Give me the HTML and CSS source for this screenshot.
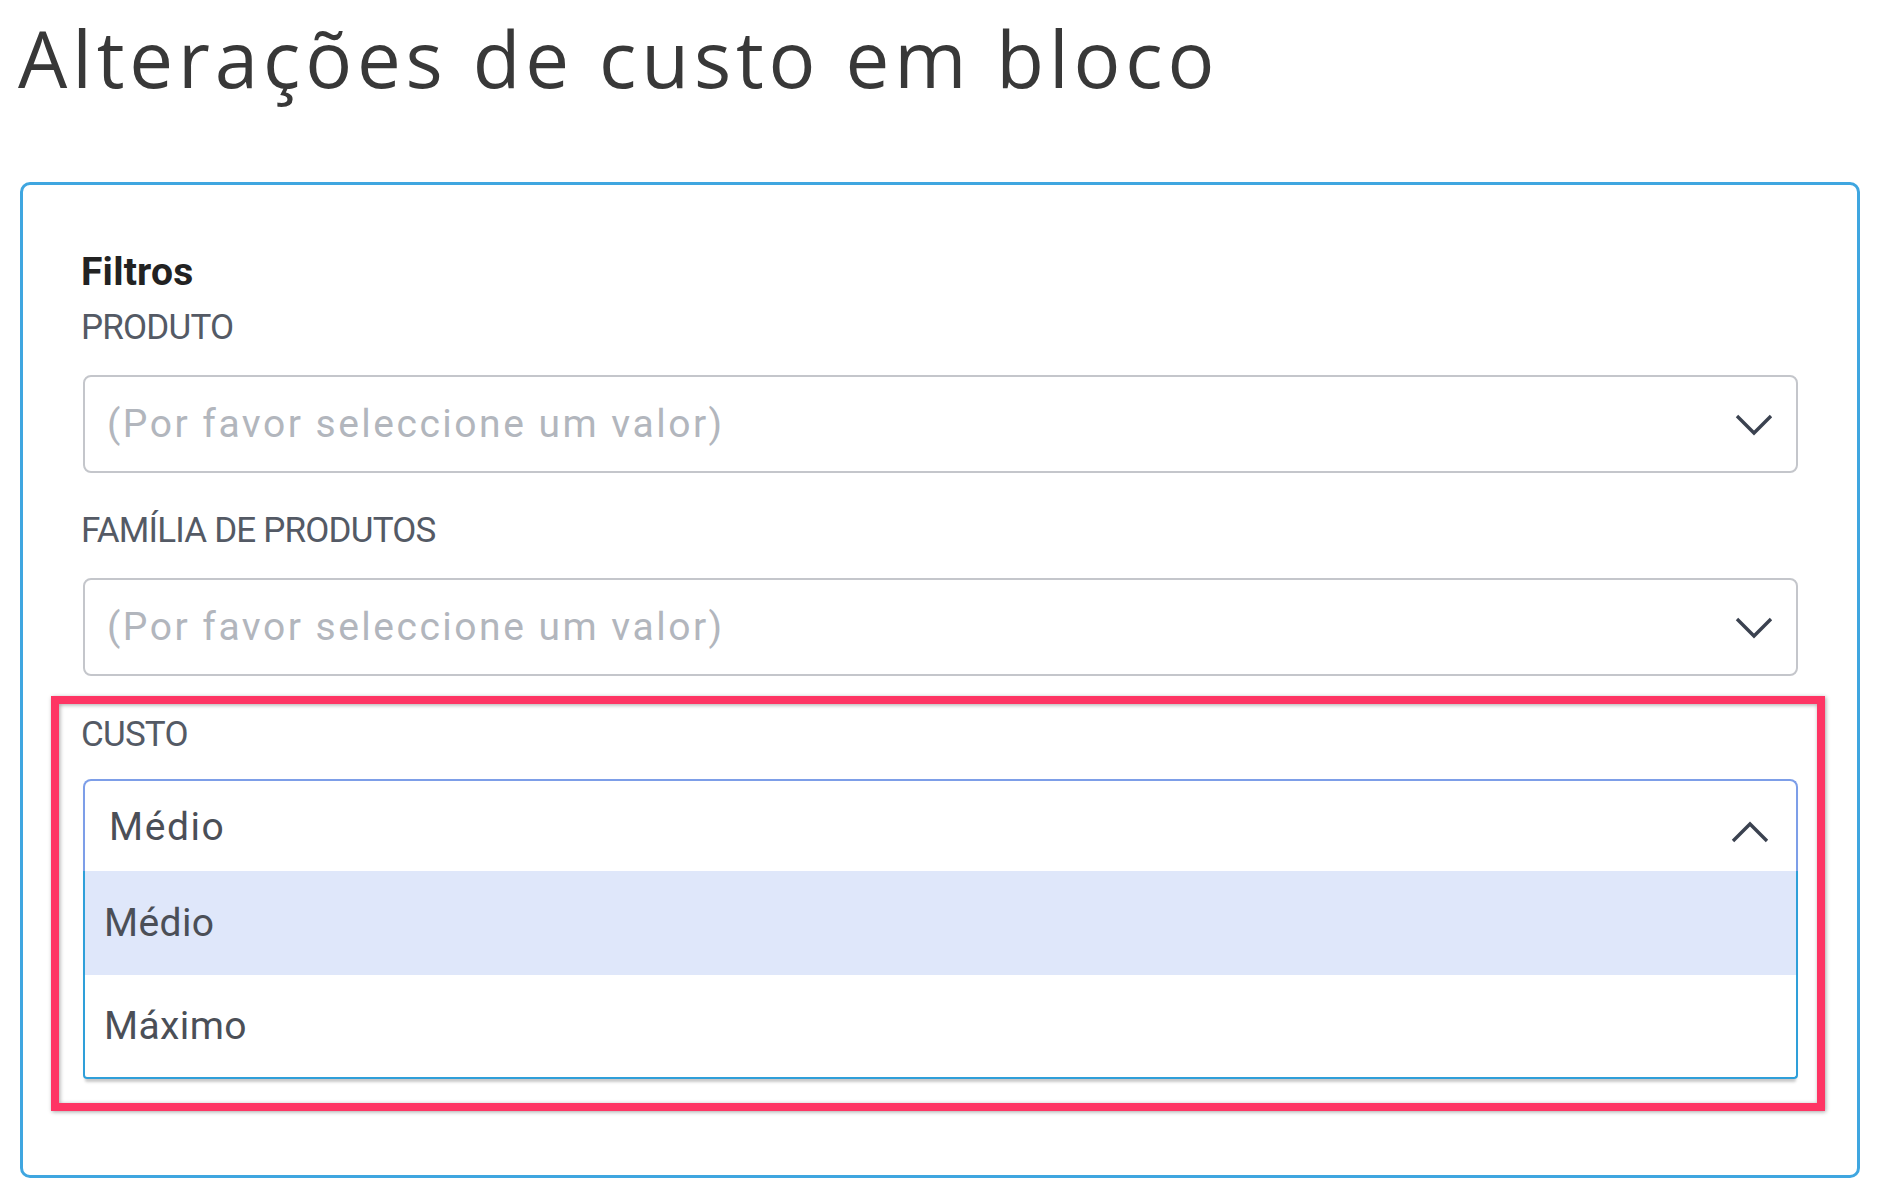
FILE: index.html
```html
<!DOCTYPE html>
<html lang="pt">
<head>
<meta charset="utf-8">
<title>Alterações de custo em bloco</title>
<link rel="stylesheet" href="styles.css">
</head>
<body>
<h1 class="page-title">Alterações de custo em bloco</h1>
<section class="card">
  <h2 class="section-title">Filtros</h2>

  <div class="field">
    <label class="field-label">PRODUTO</label>
    <div class="select">
      <span class="placeholder">(Por favor seleccione um valor)</span>
      <svg class="chev" width="38" height="22" viewBox="0 0 38 22"><path d="M2 2 L19 19 L36 2" fill="none" stroke="#3b4250" stroke-width="3.4"/></svg>
    </div>
  </div>

  <div class="field">
    <label class="field-label">FAMÍLIA DE PRODUTOS</label>
    <div class="select">
      <span class="placeholder">(Por favor seleccione um valor)</span>
      <svg class="chev" width="38" height="22" viewBox="0 0 38 22"><path d="M2 2 L19 19 L36 2" fill="none" stroke="#3b4250" stroke-width="3.4"/></svg>
    </div>
  </div>

  <div class="highlight">
    <label class="field-label custo-label">CUSTO</label>
    <div class="select-open">
      <div class="select-head">
        <span class="value">Médio</span>
        <svg class="chev-up" width="38" height="22" viewBox="0 0 38 22"><path d="M2 20 L19 3 L36 20" fill="none" stroke="#3b4250" stroke-width="3.4"/></svg>
      </div>
      <ul class="options">
        <li class="option active">Médio</li>
        <li class="option">Máximo</li>
      </ul>
    </div>
  </div>
</section>
</body>
</html>
```

FILE: styles.css
```css
html, body {
  margin: 0;
  padding: 0;
  background: #ffffff;
}

body {
  padding: 11px 0 0 0;
  font-family: Roboto, "Noto Sans", sans-serif;
}

.page-title {
  margin: 0 0 0 18px;
  font-family: "Open Sans", "Noto Sans", sans-serif;
  font-weight: 400;
  font-size: 78px;
  line-height: 94px;
  letter-spacing: 4.85px;
  color: #383838;
}

.card {
  margin: 77px 0 0 20px;
  width: 1840px;
  box-sizing: border-box;
  border: 3px solid #3fa6e0;
  border-radius: 10px;
  padding: 64px 59px 64px 60px;
}

.section-title {
  margin: 0 0 0 -2px;
  font-size: 39px;
  line-height: 46px;
  font-weight: 700;
  color: #222222;
  letter-spacing: 0.2px;
}

.field-label {
  display: block;
  margin-left: -2px;
  font-size: 35px;
  line-height: 40px;
  letter-spacing: -0.8px;
  color: #545a65;
}

.field {
  margin-top: 13px;
}

.field + .field {
  margin-top: 38px;
}

.field .field-label {
  margin-bottom: 27px;
}

.select {
  height: 98px;
  box-sizing: border-box;
  border: 2px solid #c4c6cb;
  border-radius: 8px;
  display: flex;
  align-items: center;
  justify-content: space-between;
  padding: 0 23px 0 22px;
}

.placeholder {
  font-size: 39px;
  letter-spacing: 2.5px;
  color: #b2b6bd;
}

.chev {
  display: block;
  margin-top: 2px;
}

.highlight {
  margin: 20px -27px 0 -32px;
  border: 8px solid #fe3564;
  padding: 11px 19px 24px 24px;
  box-shadow: 1px 1px 4px rgba(0, 0, 0, 0.35), inset 1px 1px 4px rgba(0, 0, 0, 0.35);
}

.custo-label {
  margin-bottom: 24px;
}

.select-open {
  box-shadow: 0 5px 3px -2px rgba(0, 0, 0, 0.22);
  border-radius: 0 0 4px 4px;
}

.select-head {
  height: 92px;
  box-sizing: border-box;
  border: 2px solid #7d9ee8;
  border-bottom: none;
  border-radius: 8px 8px 0 0;
  display: flex;
  align-items: center;
  justify-content: space-between;
  padding: 0 27px 0 24px;
}

.value {
  font-size: 39px;
  letter-spacing: 1.6px;
  color: #4b4f57;
  margin-top: 2px;
}

.chev-up {
  display: block;
  margin-top: 12px;
}

.options {
  list-style: none;
  margin: 0;
  padding: 0;
  border: 2px solid #2f9fd9;
  border-top: none;
  border-radius: 0 0 4px 4px;
}

.option {
  height: 102px;
  display: flex;
  align-items: center;
  padding-left: 19px;
  font-size: 39px;
  letter-spacing: 0.4px;
  color: #4b4f57;
}

.option.active {
  height: 104px;
  background: #dfe7fa;
}
```
